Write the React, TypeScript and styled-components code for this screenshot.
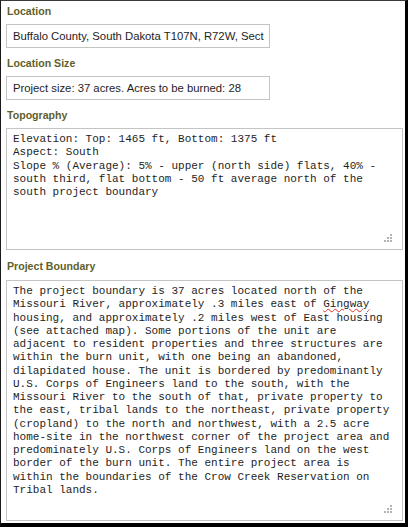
import React from "react";
import styled, { createGlobalStyle } from "styled-components";

const Global = createGlobalStyle`
  html, body { margin: 0; padding: 0; background: #ffffff; }
  * { box-sizing: border-box; }
`;

const Frame = styled.div`
  width: 408px;
  height: 527px;
  background: #ffffff;
  border-left: 1px solid #1a1a1a;
  border-top: 1px solid #3a3a3a;
  border-right: 3px solid #000000;
  border-bottom: 4px solid #000000;
  padding: 3px 0 0 5px;
  display: flex;
  flex-direction: column;
  overflow: hidden;
`;

const Field = styled.div<{ $after: number }>`
  display: flex;
  flex-direction: column;
  margin-bottom: ${(p) => p.$after}px;
`;

const Label = styled.div<{ $gap: number }>`
  font-family: "Liberation Sans", Arial, sans-serif;
  font-weight: 700;
  font-size: 10.6px;
  line-height: 14px;
  height: 14px;
  color: #5f5f2c;
  padding-left: 1px;
  margin-bottom: ${(p) => p.$gap}px;
`;

const TextBox = styled.div`
  width: 264px;
  height: 24px;
  border: 1px solid #c4c4c4;
  padding: 0 4px 0 6px;
  display: flex;
  align-items: center;
  font-family: "Liberation Sans", Arial, sans-serif;
  font-size: 11.3px;
  color: #1e1e1e;
  white-space: nowrap;
  overflow: hidden;
`;

const Area = styled.div<{ $h: number }>`
  position: relative;
  width: 397px;
  height: ${(p) => p.$h}px;
  border: 1px solid #c4c4c4;
  padding: 4px 6px 0 6px;
  font-family: "Liberation Mono", "Courier New", monospace;
  font-size: 11px;
  line-height: 13.25px;
  color: #1e1e1e;
  overflow: hidden;
`;

const Line = styled.div`
  height: 13.25px;
  white-space: pre;
`;

const Misspelled = styled.span`
  text-decoration: underline wavy #e0302a;
  text-decoration-thickness: 1px;
  text-underline-offset: 1px;
`;

const Grip = styled.svg`
  position: absolute;
  right: 9px;
  bottom: 6px;
  width: 9px;
  height: 9px;
`;

const ResizeGrip = () => (
  <Grip viewBox="0 0 9 9">
    {[
      [7, 1],
      [4, 4],
      [7, 4],
      [1, 7],
      [4, 7],
      [7, 7],
    ].map(([x, y]) => (
      <rect key={`${x}-${y}`} x={x - 1} y={y - 1} width={2} height={2} fill="#b4b4b4" />
    ))}
  </Grip>
);

const topography = [
  "Elevation: Top: 1465 ft, Bottom: 1375 ft",
  "Aspect: South",
  "Slope % (Average): 5% - upper (north side) flats, 40% -",
  "south third, flat bottom - 50 ft average north of the",
  "south project boundary",
];

const boundary = [
  "The project boundary is 37 acres located north of the",
  "Missouri River, approximately .3 miles east of |Gingway|",
  "housing, and approximately .2 miles west of East housing",
  "(see attached map). Some portions of the unit are",
  "adjacent to resident properties and three structures are",
  "within the burn unit, with one being an abandoned,",
  "dilapidated house. The unit is bordered by predominantly",
  "U.S. Corps of Engineers land to the south, with the",
  "Missouri River to the south of that, private property to",
  "the east, tribal lands to the northeast, private property",
  "(cropland) to the north and northwest, with a 2.5 acre",
  "home-site in the northwest corner of the project area and",
  "predominately U.S. Corps of Engineers land on the west",
  "border of the burn unit. The entire project area is",
  "within the boundaries of the Crow Creek Reservation on",
  "Tribal lands.",
];

const renderLine = (text: string, i: number) => {
  const parts = text.split("|");
  return (
    <Line key={i}>
      {parts.map((part, j) =>
        j % 2 === 1 ? <Misspelled key={j}>{part}</Misspelled> : part
      )}
    </Line>
  );
};

export default function App() {
  return (
    <>
      <Global />
      <Frame>
        <Field $after={8}>
          <Label $gap={6}>Location</Label>
          <TextBox>Buffalo County, South Dakota T107N, R72W, Sect</TextBox>
        </Field>
        <Field $after={8}>
          <Label $gap={6}>Location Size</Label>
          <TextBox>Project size: 37 acres. Acres to be burned: 28</TextBox>
        </Field>
        <Field $after={9}>
          <Label $gap={6}>Topography</Label>
          <Area $h={122}>
            {topography.map(renderLine)}
            <ResizeGrip />
          </Area>
        </Field>
        <Field $after={0}>
          <Label $gap={7}>Project Boundary</Label>
          <Area $h={241}>
            {boundary.map(renderLine)}
            <ResizeGrip />
          </Area>
        </Field>
      </Frame>
    </>
  );
}
